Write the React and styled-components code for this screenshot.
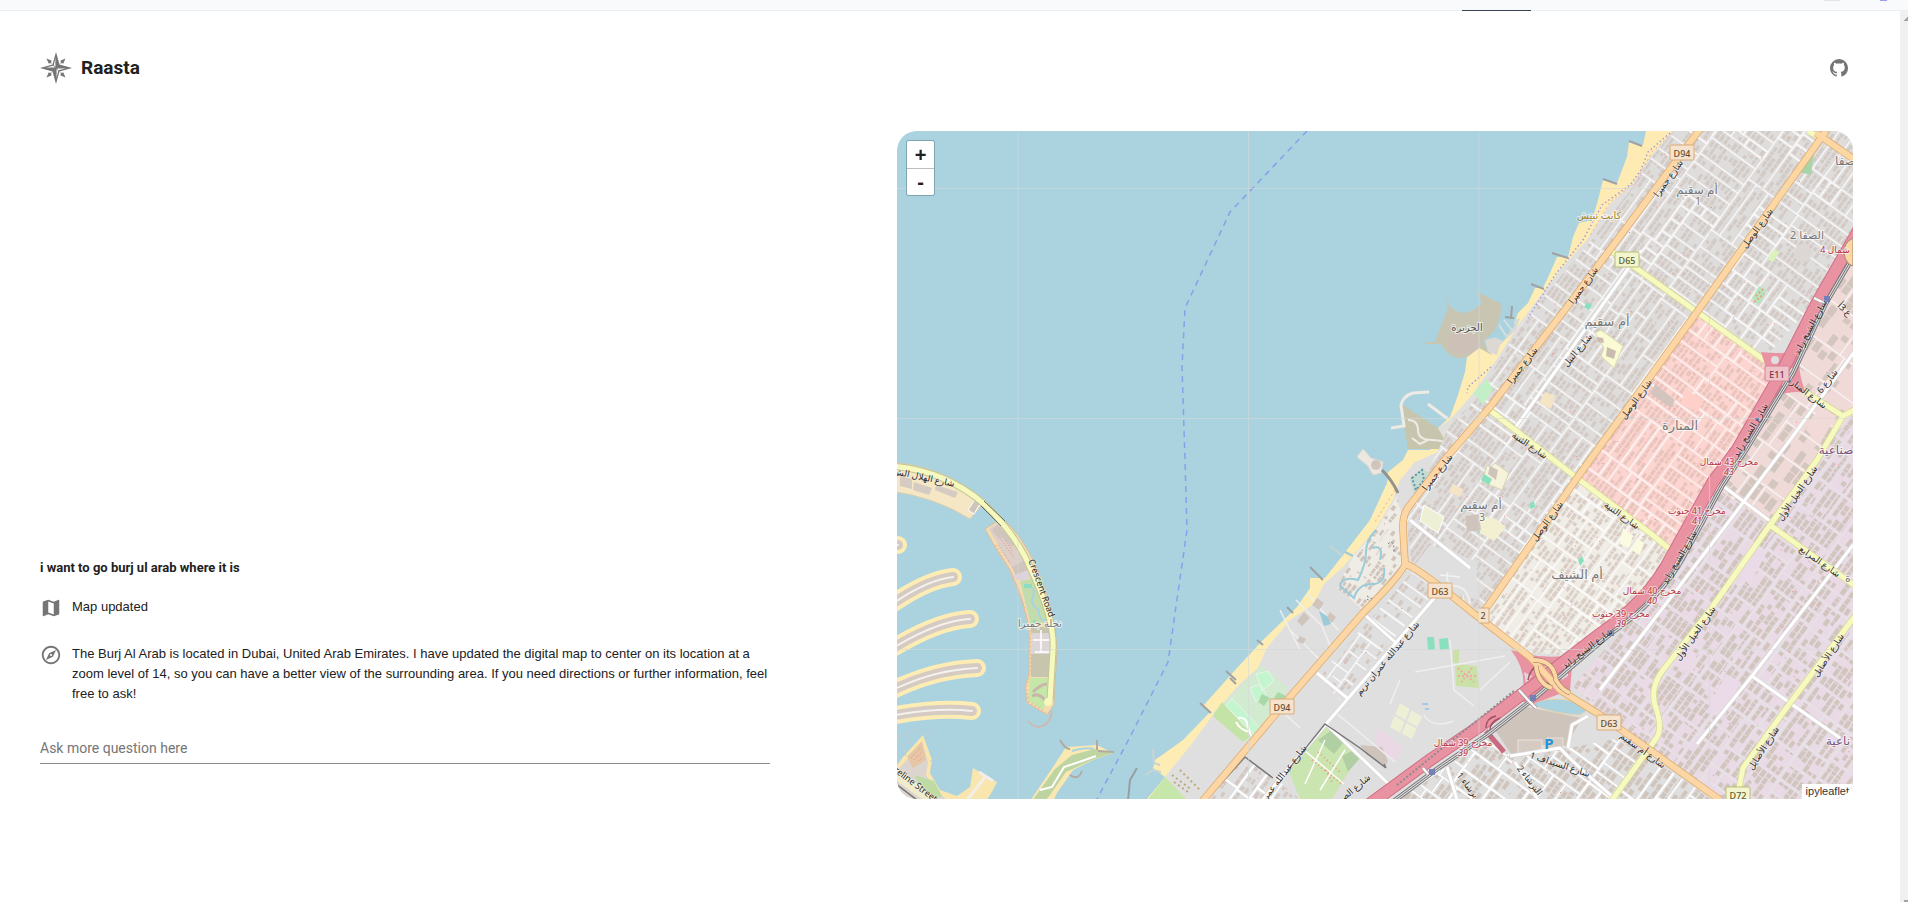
import React from "react";
import styled, { createGlobalStyle } from "styled-components";
import { MdMap, MdOutlineExplore } from "react-icons/md";
import { VscGithubInverted } from "react-icons/vsc";

const GlobalStyle = createGlobalStyle`
  *, *::before, *::after { box-sizing: border-box; }
  body {
    margin: 0;
    background: #ffffff;
    color: #212121;
    font-family: Roboto, "Noto Sans", sans-serif;
  }
`;

/* ---------- map geometry ---------- */

const ANGLE = (-54 * Math.PI) / 180;
const CA = Math.cos(ANGLE);
const SA = Math.sin(ANGLE);

function makeRandom(seed) {
  let s = seed;
  return () => {
    s = (s * 1664525 + 1013904223) % 4294967296;
    return s / 4294967296;
  };
}

const parse = (text) => text.split(" ").map((p) => p.split(",").map(Number));
const toXY = (u, v) => [(u * CA - v * SA).toFixed(1), (u * SA + v * CA).toFixed(1)];
const quad = (u0, v0, u1, v1) =>
  `M${toXY(u0, v0)}L${toXY(u1, v0)}L${toXY(u1, v1)}L${toXY(u0, v1)}Z`;

/* Splits a district into street blocks and fills them with buildings. */
function buildDistrict(points, seed, blockLength, blockWidth, lot, density) {
  const random = makeRandom(seed);
  const uv = parse(points).map(([x, y]) => [x * CA + y * SA, -x * SA + y * CA]);
  const us = uv.map((p) => p[0]);
  const vs = uv.map((p) => p[1]);
  const streets = [];
  const lanes = [];
  const houses = [];
  const specks = [];
  const split = (u0, v0, u1, v1, depth) => {
    const w = u1 - u0;
    const h = v1 - v0;
    const flip = (Math.floor(u0 / 90) + Math.floor(v0 / 70)) % 2 === 0;
    const limitU = flip ? blockLength : blockWidth;
    const limitV = flip ? blockWidth : blockLength;
    if (depth < 14 && (w > limitU * 1.5 || h > limitV * 1.5)) {
      const t = 0.38 + random() * 0.24;
      if (w / limitU > h / limitV) {
        split(u0, v0, u0 + w * t, v1, depth + 1);
        split(u0 + w * t, v0, u1, v1, depth + 1);
      } else {
        split(u0, v0, u1, v0 + h * t, depth + 1);
        split(u0, v0 + h * t, u1, v1, depth + 1);
      }
      return;
    }
    (depth % 3 === 0 ? streets : lanes).push(quad(u0, v0, u1, v1));
    for (let v = v0 + 2; v < v1 - 2; v += lot + 1) {
      const bottom = Math.min(v + lot, v1 - 1.5);
      let u = u0 + 2;
      while (u < u1 - 2) {
        const length = lot * (0.6 + random() * 1.2);
        const right = Math.min(u + length, u1 - 1.5);
        if (random() < density) {
          houses.push(quad(u, v + random() * 0.8, right, bottom - random() * 0.8));
        }
        u += length + 0.8;
      }
    }
    if (random() < 0.6) {
      const [x, y] = toXY(u0 + random() * w, v0 + random() * h);
      specks.push(`M${x},${y}h1v1h-1z`);
    }
  };
  split(Math.min(...us), Math.min(...vs), Math.max(...us), Math.max(...vs), 0);
  return {
    streets: streets.join(""),
    lanes: lanes.join(""),
    houses: houses.join(""),
    specks: specks.join(""),
  };
}

const DISTRICTS = [
  { id: "jumeirah", fill: "#dfdddc", house: "#d3cac5", lane: "#f7f6f6", seed: 7, size: [46, 14, 4, 0.75],
    points: "1674,131 1853,131 1853,237 1817,300 1765,358 1577,478 1490,600 1475,610 1412,565 1406,520 1412,505 1450,425 1475,400 1522,323 1587,245 1633,187 1652,157" },
  { id: "manara", fill: "#fdd5d0", house: "#e8c4bd", lane: "#fbf0ee", seed: 21, size: [46, 13, 4, 0.75],
    points: "1697,315 1765,358 1783,378 1733,453 1670,548 1577,478" },
  { id: "shaif", fill: "#f0ece6", house: "#d9cfc6", lane: "#fbfaf8", seed: 35, size: [34, 15, 4, 0.7],
    points: "1577,480 1650,533 1668,552 1645,590 1600,630 1560,655 1530,653 1482,616" },
  { id: "quoz", fill: "#f0dad8", house: "#d2c6be", lane: "#f6f2f1", seed: 49, size: [44, 28, 8, 0.55],
    points: "1853,256 1853,410 1817,460 1770,525 1716,488 1745,450 1795,372" },
  { id: "industrial", fill: "#e9dae6", house: "#d1c6be", lane: "#e6e2e6", seed: 64, size: [36, 18, 5, 0.72],
    points: "1853,412 1853,799 1713,799 1620,735 1572,685 1612,642 1685,560 1716,488 1770,525 1817,460" },
  { id: "barsha", fill: "#e0dfdf", house: "#d0c5bc", lane: "#ffffff", seed: 80, size: [34, 15, 5, 0.75],
    points: "1400,799 1488,738 1515,758 1570,748 1620,738 1713,799" },
  { id: "sufouh", fill: "#e0dfdf", house: "#d3c9c2", lane: "#f8f8f8", seed: 91, size: [36, 15, 4, 0.4],
    points: "1412,572 1436,590 1340,700 1318,676 1370,620" },
  { id: "marsa", fill: "#e0dfdf", house: "#d3c9c2", lane: "#ffffff", seed: 103, size: [34, 18, 4, 0.5],
    points: "1244,757 1275,778 1300,799 1208,799" },
  { id: "resort", fill: "#efebe5", house: "#d0c5bc", lane: "#efebe5", seed: 117, size: [22, 14, 4, 0.6],
    points: "1397,496 1403,520 1403,562 1363,610 1337,588 1352,558 1376,530" },
].map((d) => ({ ...d, ...buildDistrict(d.points, d.seed, ...d.size) }));

const COAST =
  "1646,131 1643,145 1629,142 1627,157 1617,183 1603,180 1598,200 1592,220 1579,223 1573,237 1568,257 1557,257 1550,273 1543,288 1535,288 1528,303 1518,313 1512,330 1500,342 1492,348 1479,348 1467,357 1465,372 1458,395 1450,417 1438,428 1430,450 1408,450 1403,460 1388,472 1387,483 1370,520 1343,555 1325,578 1310,578 1310,588 1297,607 1263,640 1237,668 1203,706 1210,712 1183,740 1155,760 1153,768 1165,777 1147,799 1853,799 1853,131";
const INLAND =
  "1672,131 1650,157 1633,183 1610,204 1587,240 1560,270 1520,323 1495,362 1472,395 1450,420 1438,428 1450,447 1415,462 1400,480 1393,500 1375,530 1343,567 1324,584 1314,604 1290,620 1267,648 1258,668 1238,686 1213,715 1190,746 1165,777 1185,799 1853,799 1853,131";

const ORANGE = [
  "M1703,125L1600,263L1567,307L1490,407L1447,457L1410,505Q1402,514 1403,530L1405,563Q1406,570 1363,613L1290,697L1200,804",
  "M1405,564Q1416,566 1473,613L1530,657L1560,690L1597,713L1650,750L1720,800",
  "M1826,131L1697,312L1577,478L1490,603L1480,616",
  "M1816,133L1858,162",
];
const YELLOW = [
  "M1610,250L1643,273L1697,312L1760,357L1807,393L1843,416L1858,408",
  "M1843,416L1817,460L1770,525L1710,610L1663,670Q1650,687 1655,705Q1664,730 1655,740L1610,803",
  "M1487,408L1550,457L1577,478L1650,533L1672,551",
  "M1770,525L1858,588",
  "M1858,612L1790,703L1743,768L1736,803",
  "M1808,131L1820,138",
];
const HIGHWAY =
  "M1860,228L1817,303L1783,370L1737,450L1713,482L1672,556Q1650,600 1600,634L1530,688L1480,726L1430,760L1370,804";
const RAIL =
  "M1866,235L1826,303L1793,373L1746,450L1722,486L1684,556Q1660,600 1610,634L1537,696L1487,735L1437,769L1390,804";
const WHITE_ROADS = [
  "M1436,596L1327,723L1283,775L1260,803",
  "M1325,723L1397,792",
  "M1366,616L1395,642",
  "M1317,673L1347,698",
  "M1860,344L1790,440L1730,520L1600,690",
  "M1723,486L1770,521",
  "M1752,676L1790,703L1840,738",
  "M1853,545L1752,676L1697,744",
  "M1642,251L1640,252L1515,428",
  "M1390,803L1440,770",
  "M1510,756L1560,748Q1575,765 1620,803",
  "M1515,762L1540,803",
  "M1447,767L1458,803",
  "M1588,716L1572,725L1568,748",
  "M1410,520L1470,568",
];

const STREET_LABELS = [
  [1668, 178, -54, "شارع جميرا"],
  [1583, 285, -54, "شارع جميرا"],
  [1522, 365, -52, "شارع جميرا"],
  [1437, 472, -52, "شارع جميرا"],
  [1577, 350, -50, "شارع النيل"],
  [1757, 228, -54, "شارع الوصل"],
  [1636, 399, -54, "شارع الوصل"],
  [1547, 521, -54, "شارع الوصل"],
  [1810, 327, -62, "شارع الشيخ زايد"],
  [1750, 430, -60, "شارع الشيخ زايد"],
  [1679, 557, -60, "شارع الشيخ زايد"],
  [1587, 648, -37, "شارع الشيخ زايد"],
  [1807, 392, 37, "شارع المنارة"],
  [1827, 381, -52, "شارع 6"],
  [1845, 309, 44, "ع 3أ"],
  [1530, 445, 34, "شارع الثنية"],
  [1622, 515, 35, "شارع الثنية"],
  [1797, 493, -56, "شارع الخيل الأول"],
  [1695, 633, -55, "شارع الخيل الأول"],
  [1820, 561, 35, "شارع المرابع"],
  [1828, 655, -57, "شارع الأصايل"],
  [1763, 748, -57, "شارع الأصايل"],
  [1643, 750, 36, "شارع أم سقيم"],
  [1560, 764, 18, "شارع السيداف 1"],
  [1530, 780, 52, "البرشاء 2"],
  [1468, 785, 52, "برشاء 1"],
  [1387, 658, -50, "شارع عبدالله عمران تريم"],
  [1284, 772, -52, "شارع عبدالله عمر"],
  [1354, 788, -40, "شارع الص"],
  [924, 477, 12, "شارع الهلال الش"],
  [1042, 588, 70, "Crescent Road"],
  [916, 784, 37, "reline Street"],
];

const PLACE_LABELS = [
  [1697, 189, 12, "#777777", "أم سقيم"],
  [1698, 201, 10, "#777777", "1"],
  [1607, 321, 13, "#777777", "أم سقيم"],
  [1481, 504, 12, "#777777", "أم سقيم"],
  [1482, 517, 10, "#777777", "3"],
  [1680, 425, 13, "#777777", "المنارة"],
  [1577, 574, 13, "#777777", "أم الشيف"],
  [1807, 234, 11, "#777777", "الصفا 2"],
  [1845, 160, 12, "#777777", "صفا"],
  [1467, 327, 10, "#555555", "الجزيرة"],
  [1040, 623, 10, "#777777", "نخلة جميرا"],
  [1599, 215, 10, "#a5842b", "كايت بيتش"],
  [1836, 449, 12, "#7a5580", "صناعية"],
  [1838, 740, 12, "#7a5580", "ناعية"],
  [1848, 577, 11, "#777777", "ة"],
];

const EXITS = [
  [1835, 249, "4 شمال", ""],
  [1729, 461, "مخرج 43 شمال", "43"],
  [1697, 510, "مخرج 41 جنوب", "41"],
  [1652, 590, "مخرج 40 شمال", "40"],
  [1621, 613, "مخرج 39 جنوب", "39"],
  [1463, 742, "مخرج 39 شمال", "39"],
];

const SHIELDS = [
  [1682, 153, "D94", "#f5e3cd", "#d9ac79", "#6b4d2e"],
  [1627, 260, "D65", "#f3f5cf", "#b8bf78", "#5c6030"],
  [1777, 374, "E11", "#eec3ca", "#d78496", "#7c2f42"],
  [1440, 591, "D63", "#f5e3cd", "#d9ac79", "#6b4d2e"],
  [1609, 723, "D63", "#f5e3cd", "#d9ac79", "#6b4d2e"],
  [1282, 707, "D94", "#f5e3cd", "#d9ac79", "#6b4d2e"],
  [1738, 795, "D72", "#f3f5cf", "#b8bf78", "#5c6030"],
];

const FRONDS = [
  "M885,545H898",
  "M885,609Q925,580 953,577",
  "M885,653Q935,621 970,619",
  "M885,694Q930,670 977,668",
  "M885,717Q935,707 972,711",
];

const GROINS =
  "M1629,141L1642,146M1603,179L1617,184M1583,217L1592,220M1552,253L1568,258M1531,284L1544,289M1310,567L1323,580M1287,607L1293,613M1257,640L1263,645M1226,671L1236,680M1230,678L1236,684M1200,703L1211,713M1505,317L1514,318M1512,306L1511,319";

/* ---------- map drawing ---------- */

const MapSvg = styled.svg`
  display: block;
  width: 100%;
  height: 100%;
  font-family: "Noto Sans", "DejaVu Sans", sans-serif;
`;

const MapLabel = styled.text`
  text-anchor: middle;
  dominant-baseline: central;
  paint-order: stroke;
  stroke: ${(p) => p.$halo || "rgba(255,255,255,0.6)"};
  stroke-width: ${(p) => (p.$halo === "none" ? 0 : 2)}px;
  fill: ${(p) => p.$color};
  font-size: ${(p) => p.$size}px;
  font-style: ${(p) => (p.$italic ? "italic" : "normal")};
  font-weight: ${(p) => p.$weight || 400};
`;

function District({ d }) {
  return (
    <g clipPath={`url(#clip-${d.id})`}>
      <polygon points={d.points} fill={d.fill} />
      <path d={d.houses} fill={d.house} />
      <path d={d.lanes} fill="none" stroke={d.lane} strokeWidth="1.4" />
      <path d={d.streets} fill="none" stroke={d.lane} strokeWidth="2" />
      <path d={d.specks} fill="#ee8f88" />
    </g>
  );
}

function Roads({ paths, casing, fill, width }) {
  return (
    <g fill="none" strokeLinejoin="round">
      {paths.map((d) => <path key={`c${d}`} d={d} stroke={casing} strokeWidth={width + 1.5} />)}
      {paths.map((d) => <path key={d} d={d} stroke={fill} strokeWidth={width} />)}
    </g>
  );
}

function Palm() {
  return (
    <g>
      {[["#fdecb3", 18], ["#d5cbc3", 10], ["#f4f1ee", 2]].map(([stroke, width]) => (
        <g key={width} fill="none" stroke={stroke} strokeWidth={width} strokeLinecap="round">
          {FRONDS.map((d) => <path key={d} d={d} />)}
        </g>
      ))}
      <path d="M890,462Q945,466 985,501L970,519Q935,497 890,491Z" fill="#f5e6c4" stroke="#d8ceb0" />
      <path d="M900,476l12,3v10l-12,-3zM914,482l18,6-3,7-16,-5zM936,485l22,7-3,6-20,-8z" fill="#d5cbc3" />
      <path d="M968,510l8,-12 5,4-7,12z" fill="#d0c5bc" stroke="#ffffff" />
      <path d="M1002,518L985,529L995,547L1010,570L1022,600L1029,627L1029,673L1025,687L1027,703L1047,715L1054,705L1057,650Q1054,605 1037,568Q1022,535 1002,518Z" fill="#f2dcb0" stroke="#cdbfa8" />
      <path d="M989,529l11,-8 22,24 6,14-16,9-12,-20z" fill="#dccfc8" />
      <path d="M992,530l6,-5 8,8-7,6zM1001,536l8,-4 7,9-4,6zM1012,567l14,-7 4,10-13,10z" fill="#d0c5bc" />
      <path d="M1012,576l20,-8 8,6-18,7z" fill="#ddd3dc" />
      <path d="M1020,581l22,-4 9,43-20,6z" fill="#c3dcae" />
      <path d="M1025,585q12,3 8,11t6,14q-2,8 7,12" fill="none" stroke="#aad3df" strokeWidth="2" />
      <path d="M1024,584h8v4h-8zM1033,620h3v3h-3z" fill="#8ae0be" />
      <path d="M1031,627h22v6h-22zM1031,654h22v23h-22z" fill="#c8c5ae" />
      <path d="M1031,633h22v21h-22z" fill="#dcd6d6" />
      <path d="M1030,678h20v20l-8,12-14,-10z" fill="#c5e8a8" />
      <path d="M1033,692q8,-8 14,-8M1032,696q8,-4 14,6" fill="none" stroke="#c8b8ac" strokeWidth="3" />
      <path d="M1041,630v22M1033,640h18M1035,652h16" stroke="#ffffff" strokeWidth="1.5" />
      <path d="M995,545L1011,572L1023,602L1030,632V672L1026,688L1029,702L1046,713" fill="none" stroke="#f0bd9c" strokeWidth="2" strokeDasharray="2 2" />
      <path d="M1052,711Q1050,726 1038,727Q1032,726 1028,721" fill="none" stroke="#cdb9b4" strokeWidth="2" />
      <path d="M1000,538l14,20M998,545l12,18M1005,540l8,12" stroke="#ef8a8a" strokeDasharray="1 2" />
      <path d="M890,466Q945,470 984,504Q1018,536 1032,572Q1055,620 1053,650L1050,700" fill="none" stroke="#c4c492" strokeWidth="7" />
      <path d="M890,466Q945,470 984,504Q1018,536 1032,572Q1055,620 1053,650L1050,700" fill="none" stroke="#f6f9bd" strokeWidth="5" />
      <circle cx="1048" cy="702" r="4" fill="#f6f9bd" />
      <path d="M984,501L1005,521M981,506L1001,526" stroke="#706d60" />
      <path d="M890,775L903,757L923,735L932,760L930,773L940,790L957,796L970,787L973,768L997,782L993,790L985,803H890Z" fill="#f9e5ae" />
      <path d="M890,778L905,762L922,742L928,762L926,775L936,790L950,803H890Z" fill="#ddd5cf" />
      <path d="M907,757L922,741L926,760L913,768z" fill="#e5c6a6" />
      <path d="M911,758l10,-11M914,760l8,-8M918,761l5,-4" stroke="#ee9077" strokeDasharray="1 2" />
      <path d="M914,775l20,6 8,15-12,5z" fill="#bddba3" />
      <path d="M979,772l14,9M985,777l-17,22" stroke="#f2efec" strokeWidth="3" />
      <path d="M898,737l22,-9M901,738l5,18M908,735l4,12M925,734l8,-1M930,761l8,-3" stroke="#c4cdd2" />
      <path d="M888,768L942,808" stroke="#f1eccb" strokeWidth="10" />
      <path d="M888,778L925,806M886,782L918,808" stroke="#777777" strokeWidth="1.5" />
      <path d="M1030,801L1053,767L1066,747L1097,745L1113,753L1093,760L1073,770L1057,793L1053,801Z" fill="#fae8b2" />
      <path d="M1032,801L1055,769L1072,755L1095,749L1113,753L1092,760L1066,772L1050,795L1045,801Z" fill="#bfd5a1" />
      <path d="M1072,751q12,-4 22,-2" fill="none" stroke="#abd3df" strokeWidth="2" />
      <path d="M1040,790l12,-3 12,-20 18,-6 14,-5" fill="none" stroke="#ffffff" strokeWidth="2" />
      <path d="M1060,740q5,9 10,9M1097,740v10M1098,751l16,1M1070,775q8,6 12,-4" fill="none" stroke="#b3a9a2" strokeWidth="2" />
      <path d="M1137,768L1130,780L1128,801" fill="none" stroke="#969fa1" strokeWidth="2" />
    </g>
  );
}

function MapDrawing() {
  return (
    <MapSvg viewBox="897 131 956 668" preserveAspectRatio="xMidYMid slice" role="img" aria-label="Map of Jumeirah, Dubai">
      <defs>
        {DISTRICTS.map((d) => (
          <clipPath id={`clip-${d.id}`} key={d.id}><polygon points={d.points} /></clipPath>
        ))}
      </defs>
      <rect x="897" y="131" width="956" height="668" fill="#abd3df" />
      <path d="M1307,131L1230,212L1185,308L1182,367L1185,460L1187,530L1168,662L1130,737L1097,799" fill="none" stroke="#86a0ec" strokeWidth="1.5" strokeDasharray="6 5" />
      <Palm />

      <polygon points={COAST} fill="#fdecb3" />
      <polygon points={INLAND} fill="#e0dfdf" />
      <path d="M1445,293L1448,303Q1452,311 1463,313Q1474,312 1482,302L1477,292L1502,304Q1501,317 1495,330L1483,342L1492,355L1479,348L1467,357Q1455,362 1444,349L1441,344L1425,344L1426,342L1435,342Q1441,325 1448,308Z" fill="#c8c5b3" />
      <ellipse cx="1463" cy="343" rx="16" ry="11" fill="#cdc0b7" />
      <path d="M1485,340L1500,336L1512,322L1520,318L1516,330L1500,345L1497,355L1488,352Z" fill="#dcd9d5" />
      <path d="M1492,336L1512,318L1515,325L1503,341Z" fill="#abd3df" />
      <path d="M1499,325l8,12M1504,320l8,10" stroke="#d5dfe0" strokeWidth="2" />
      <path d="M1400,403L1438,428L1450,449H1408Z" fill="#c8c5ae" />
      <path d="M1429,392L1413,393Q1403,396 1401,405L1404,426L1391,428M1428,404L1448,419" fill="none" stroke="#eeebe5" strokeWidth="3" />
      <path d="M1408,420q10,0 10,10t14,10 14,6M1412,438l8,6 8,-4" fill="none" stroke="#eeebe5" strokeWidth="2" />

      {DISTRICTS.map((d) => <District key={d.id} d={d} />)}

      <path d="M1262,665L1288,688L1265,728L1245,742L1213,713L1230,697Z" fill="#d2ead0" />
      <path d="M1256,674l12,-3 6,10-12,10zM1250,688l10,-4 6,10-10,8zM1232,698l28,30-6,6-28,-28z" fill="#c3f5ce" stroke="#e9f3e8" />
      <path d="M1262,694l8,4-6,8-6,-4zM1278,692l8,4-6,6-6,-4z" fill="#a9d9a6" />
      <path d="M1222,702L1252,735L1243,742L1213,716Z" fill="#c4e3a6" />
      <path d="M1238,718q8,-2 10,8t4,10M1236,722q4,8 14,10" fill="none" stroke="#ffffff" strokeWidth="2" />
      <path d="M1327,727L1360,753L1332,799H1300L1287,767Z" fill="#cbe5b0" />
      <path d="M1318,740l14,-10 12,12-10,12zM1342,756l12,-6 6,8-12,14z" fill="#b0cfa2" />
      <path d="M1304,750l40,34M1325,740l-20,44M1345,750l-25,40" stroke="#ffffff" strokeWidth="1.5" />
      <path d="M1312,760l30,24M1318,752l22,20M1326,770l6,12" stroke="#ee9a84" strokeWidth="2" strokeDasharray="1 3" />
      <path d="M1165,777L1188,801H1147Z" fill="#c6e6aa" />
      <path d="M1172,775l20,15M1180,770l20,20M1174,782l14,10" stroke="#bda77d" strokeDasharray="2 3" strokeWidth="2" />
      <path d="M1427,637h7l1,13h-7zM1439,639l9,-1 1,11-9,1z" fill="#8ae0be" />
      <path d="M1455,664l22,2 2,22-23,-2zM1453,650h6v13h-6z" fill="#cbe2a6" />
      <path d="M1458,668l16,14M1472,668l-12,16M1458,676h18" stroke="#ecabaa" strokeWidth="2" strokeDasharray="2 2" />
      <path d="M1400,703l22,14-10,22-22,-12z" fill="#eef0d5" />
      <path d="M1411,709l-10,24M1395,715l22,13" stroke="#e0dfdf" strokeWidth="2" />
      <path d="M1378,728l26,20-10,14-20,-16z" fill="#ead9e5" />
      <path d="M1422,704h6M1425,709h4" stroke="#6fb0ee" />
      <path d="M1360,745l22,2 6,14-3,6-18,-12z" fill="#cfc4bb" />
      <path d="M1448,572l14,10 2,24M1450,640l4,50 20,16M1415,672l90,-16M1424,715q8,14 30,6M1480,690l30,-28M1400,680l-10,24M1335,712l60,50M1300,650l-20,-40M1290,630l30,30M1270,700l30,28M1296,600l26,26 10,24M1308,594l30,36" fill="none" stroke="#f0efee" strokeWidth="1.5" />
      <path d="M1304,612l6,6-8,8-5,-5zM1317,598l7,5-5,7-7,-5zM1330,612l6,5-4,6-6,-4zM1300,636l6,3-3,5-6,-3z" fill="#d0c5bc" />
      <path d="M1319,611l8,5 4,8-7,2z" fill="#9bcbd9" />
      <path d="M1376,530q-10,10 -10,22t-8,28q-16,-4 -18,6l14,12q4,-14 18,-14t12,-16M1345,552l8,4M1372,548q12,-4 8,12" fill="none" stroke="#9bcbd9" strokeWidth="2" />
      <path d="M1367,596l10,6M1367,599l8,5M1388,544q6,-6 6,8" fill="none" stroke="#667d87" strokeDasharray="2 2" />
      <path d="M1410,480l12,-12 8,6-14,26z" fill="#c5dcd5" />
      <path d="M1412,478l10,-8 2,10-8,10z" fill="none" stroke="#5f94a5" strokeWidth="2" strokeDasharray="2 2" />
      <path d="M1473,393l14,-14 6,10-10,16z" fill="#c2f0c6" />
      <path d="M1595,333l6,-3 22,16-9,22-13,-12 3,-8z" fill="#fafbd2" stroke="#ddd9b5" />
      <path d="M1607,347l9,4-2,8-8,-3zM1597,337l6,1 1,5-6,-1z" fill="#c9bbb0" />
      <path d="M1545,392l10,4-4,13-12,-6z" fill="#f5e5c4" />
      <path d="M1587,302l5,3-3,5-5,-3z" fill="#8ae0be" />
      <path d="M1799,172l6,-9 9,-10-3,22z" fill="#a8d5a9" />
      <path d="M1752,298l7,-12 8,4-8,16z" fill="#b6e4c2" />
      <path d="M1756,296l8,-8M1754,302l10,-8" stroke="#f0a070" strokeDasharray="2 2" strokeWidth="2" />
      <path d="M1770,254l5,-5 4,3-6,10-5,-2z" fill="#d9f3bb" />
      <circle cx="1803" cy="253" r="9" fill="#ddd8d4" />
      <path d="M1487,465l4,2 4,-4 14,10-7,17-20,-8z" fill="#f5f3d9" stroke="#d6d1b5" />
      <path d="M1484,474l8,5-3,6-8,-5zM1530,503l4,-2 1,6-5,2zM1578,560l4,-4 2,5-4,5zM1476,527l4,-2 2,5-4,3z" fill="#8ae0be" />
      <path d="M1478,515l18,4 10,8-12,14-14,-8z" fill="#f3f0d1" />
      <path d="M1465,516l14,-2 2,16-14,2zM1490,466l8,4-2,10-8,-6z" fill="#cfc4bb" />
      <path d="M1424,505l20,12-6,16-18,-12z" fill="#eef0d5" stroke="#ffffff" />
      <path d="M1453,484l10,5-3,8-11,-5z" fill="#f5e5c4" />
      <path d="M1444,549L1478,562Q1474,580 1480,600L1450,592Q1420,566 1414,566L1430,545Z" fill="#e0dfdf" />
      <path d="M1448,572q-4,12 8,14t14,18M1440,575l20,2" fill="none" stroke="#f3f2f1" strokeWidth="1.5" />
      <path d="M1623,528l10,8-4,12-9,-4zM1637,538l7,5-4,12-8,-5z" fill="#fbfbe0" />
      <path d="M1655,384l20,16-4,8-20,-14z" fill="#d3c4bd" />
      <path d="M1686,390l18,10-6,12-18,-8z" fill="#ffcfc9" />
      <path d="M1678,645l18,8-4,20-20,-8zM1726,674l15,8-18,38-16,-10zM1750,545l16,8-16,32-12,-10z" fill="#ebdbe8" />
      <path d="M1806,430l14,-24 16,10-16,28z" fill="#f2dad9" />

      <path d="M1493,727L1527,707L1582,718L1566,746L1540,745L1513,757Z" fill="#cfc4bb" />
      <path d="M1518,740h24v13h-24zM1547,738h16v13h-16z" fill="#d5cbc3" stroke="#ffffff" strokeWidth="0.5" />
      <path d="M1532,705Q1542,697 1567,700Q1580,703 1586,711L1580,715Q1555,714 1532,705Z" fill="#abd3df" stroke="#e8d2a5" />

      <path d="M1357,457L1363,449L1371,458L1383,462L1381,473L1373,475L1368,466Z" fill="#ece8e1" stroke="#ddd8cc" />
      <circle cx="1376" cy="465" r="5" fill="#d0c5bc" />
      <path d="M1382,470Q1392,480 1398,493" fill="none" stroke="#92918e" strokeWidth="3" />
      <path d="M1330,546L1343,556M1153,749l1,14 6,2M1145,775l8,-5 8,2" fill="none" stroke="#c9d3d4" strokeWidth="2" />
      <path d={GROINS} stroke="#a0a1a2" strokeWidth="2" />
      <path d="M1670,133L1648,152L1641,170L1630,185L1602,205L1583,240L1555,275L1528,318M1491,367L1468,387L1467,393" fill="none" stroke="#a99cd2" strokeWidth="1.5" strokeDasharray="1.5 2.5" />
      <path d="M1672,134L1652,152L1636,182L1610,202L1590,236M1395,490L1375,522" fill="none" stroke="#f0aa94" strokeDasharray="2 3" />

      <Roads paths={WHITE_ROADS} casing="#d9d6d6" fill="#ffffff" width={3} />
      <path d="M1288,770L1325,724L1360,748L1386,768L1384,764M1207,799L1245,757L1273,778" fill="none" stroke="#77777a" strokeWidth="1.5" />
      <Roads paths={YELLOW} casing="#d8d996" fill="#f7fabf" width={5} />

      <path d="M1511,650Q1540,660 1573,655L1570,690L1530,705L1520,700Q1530,675 1511,650Z" fill="#e892a2" />
      <path d="M1541,668l12,-4-2,8-8,4zM1560,672l8,-4v8l-6,4zM1524,672l8,4-6,8z" fill="#e2d6da" />
      <path d="M1761,352Q1783,354 1787,352L1800,356Q1797,372 1806,393Q1790,390 1775,397Z" fill="#e892a2" />
      <circle cx="1775" cy="360" r="4" fill="#e0dfdf" />
      <circle cx="1792" cy="371" r="3" fill="#eadfe2" />
      <circle cx="1785" cy="384" r="3" fill="#eadfe2" />
      <path d="M1486,731L1504,752" stroke="#c86b81" strokeWidth="5" />
      <path d={HIGHWAY} fill="none" stroke="#cf6f85" strokeWidth="13" />
      <path d={HIGHWAY} fill="none" stroke="#e892a2" strokeWidth="11" />
      <path d={RAIL} fill="none" stroke="#77777a" strokeWidth="5" />
      <path d={RAIL} fill="none" stroke="#dedcdd" strokeWidth="3" />
      <path d={RAIL} fill="none" stroke="#6d6d70" strokeWidth="1" />
      <path d="M1397,785L1440,750L1515,690" fill="none" stroke="#8c8c8c" strokeWidth="2" strokeDasharray="2 2" />
      <path d="M1519,690L1528,700L1536,708M1423,768l5,6M1814,298l10,5" fill="none" stroke="#b79fa4" strokeWidth="4" />
      <path d="M1519,690L1528,700L1536,708M1423,768l5,6M1814,298l10,5" fill="none" stroke="#ffffff" strokeWidth="2" />
      <path d="M1486,728q0,-10 10,-12M1490,730q0,-8 10,-12M1528,680q2,-12 12,-16" fill="none" stroke="#a24f66" strokeWidth="1.5" />

      <Roads paths={ORANGE} casing="#dcab6d" fill="#fcd6a4" width={6} />
      <path d="M1533,660Q1554,660 1556,680Q1562,690 1570,693M1536,666Q1538,684 1552,688" fill="none" stroke="#8f7050" strokeWidth="5" />
      <path d="M1533,660Q1554,660 1556,680Q1562,690 1570,693M1536,666Q1538,684 1552,688" fill="none" stroke="#fcd6a4" strokeWidth="4" />
      <path d="M1853,238q-10,5 -9,16 2,10 9,12z" fill="#fcd6a4" stroke="#a08a70" />
      {[[1611, 633], [1533, 698], [1432, 772], [1827, 299]].map(([x, y]) => (
        <rect key={x} x={x - 3} y={y - 3} width="6" height="6" fill="#7580b5" />
      ))}
      <path d="M1018,131V799M1248.5,131V799M1479,131V799M1709.5,131V799M897,188.5H1853M897,418.5H1853M897,649.5H1853" stroke="#d6dad8" strokeWidth="1" opacity="0.6" />

      {STREET_LABELS.map(([x, y, angle, label]) => (
        <MapLabel key={`${x}-${y}`} x={x} y={y} transform={`rotate(${angle} ${x} ${y})`} $size={9} $color="#2e2b28" $halo="rgba(255,255,255,0.25)">
          {label}
        </MapLabel>
      ))}
      {PLACE_LABELS.map(([x, y, size, color, label]) => (
        <MapLabel key={`${x}-${y}`} x={x} y={y} $size={size} $color={color}>{label}</MapLabel>
      ))}
      {EXITS.map(([x, y, label, number]) => (
        <g key={`${x}-${y}`}>
          <MapLabel x={x} y={y} $size={9} $color="#b8323f">{label}</MapLabel>
          {number && <MapLabel x={x} y={y + 10} $size={9} $color="#b8323f" $italic>{number}</MapLabel>}
        </g>
      ))}
      {SHIELDS.map(([x, y, label, fill, stroke, color]) => (
        <g key={`${x}-${y}`}>
          <rect x={x - 12} y={y - 8} width="24" height="15" rx="1" fill={fill} stroke={stroke} />
          <MapLabel x={x} y={y} $size={9} $color={color} $halo="none" $weight={500}>{label}</MapLabel>
        </g>
      ))}
      <path d="M1479,608H1489V623H1479" fill="#f5e3cd" stroke="#d9ac79" />
      <MapLabel x={1483} y={615} $size={9} $color="#6b4d2e" $halo="none" $weight={500}>2</MapLabel>
      <MapLabel x={1549} y={743} $size={15} $color="#1f93dc" $halo="none" $weight={700}>P</MapLabel>
    </MapSvg>
  );
}

/* ---------- page ---------- */

const Page = styled.div`
  display: flex;
  flex-direction: column;
  min-height: 100vh;
`;

const HostBar = styled.div`
  display: flex;
  justify-content: flex-end;
  align-items: flex-start;
  height: 11px;
  padding-right: 21px;
  background: #f9fafc;
  border-bottom: 1px solid #eceff2;
`;

const ActiveTab = styled.span`
  align-self: flex-end;
  width: 69px;
  height: 1px;
  margin: 0 293px -1px 0;
  background: #374151;
`;

const Sliver = styled.span`
  width: ${(p) => p.$width}px;
  height: 1px;
  margin-left: ${(p) => p.$gap || 0}px;
  background: ${(p) => p.$color};
`;

const Body = styled.div`
  display: flex;
  flex: 1;
`;

const Content = styled.div`
  flex: 1;
  min-width: 0;
`;

const ScrollTrack = styled.div`
  display: flex;
  flex-direction: column;
  justify-content: space-between;
  align-items: flex-end;
  width: 8px;
  padding-top: 6px;
  background: #f0f0f0;
  overflow: hidden;
`;

const ArrowUp = styled.span`
  width: 4px;
  height: 4px;
  background: linear-gradient(to bottom right, transparent 50%, #a3a3a3 50%);
`;

const ArrowDown = styled.span`
  width: 4px;
  height: 2px;
  background: #a3a3a3;
`;

const Header = styled.header`
  display: flex;
  justify-content: space-between;
  align-items: center;
  height: 120px;
  padding: 0 52px 6px 40px;
`;

const Brand = styled.div`
  display: flex;
  align-items: center;
  gap: 9px;
`;

const BrandName = styled.h1`
  margin: 0;
  font-size: 19px;
  line-height: 24px;
  font-weight: 700;
`;

const IconLink = styled.a`
  display: flex;
  color: #757575;
`;

const Main = styled.main`
  display: grid;
  grid-template-columns: minmax(0, 730fr) minmax(0, 956fr);
  gap: 127px;
  height: calc(100vh - 234px);
  padding: 0 47px 0 40px;
`;

const Chat = styled.section`
  display: flex;
  flex-direction: column;
  justify-content: flex-end;
  padding-bottom: 35px;
`;

const Question = styled.h2`
  margin: 0 0 19px;
  font-size: 13px;
  line-height: 20px;
  font-weight: 700;
`;

const Message = styled.div`
  display: flex;
  align-items: flex-start;
  gap: 10px;
  margin-bottom: ${(p) => p.$space}px;
  font-family: "Liberation Sans", Arial, sans-serif;
  font-size: 13px;
  line-height: 20px;

  svg {
    flex: none;
    color: #757575;
  }
`;

const MessageText = styled.p`
  margin: 0;
`;

const QuestionInput = styled.input`
  width: 100%;
  height: 32px;
  padding: 0;
  border: 0;
  border-bottom: 1px solid #8a8a8a;
  border-radius: 0;
  background: transparent;
  color: #212121;
  font-family: inherit;
  font-size: 14px;
  outline: none;

  &::placeholder {
    color: #757575;
    opacity: 1;
  }
`;

const MapPanel = styled.section`
  position: relative;
  overflow: hidden;
  border-radius: 20px;
`;

const ZoomControl = styled.div`
  position: absolute;
  top: 10px;
  left: 10px;
  display: flex;
  flex-direction: column;
  overflow: hidden;
  border-radius: 2px;
  box-shadow: 0 0 0 1px rgba(90, 130, 140, 0.55);
`;

const ZoomButton = styled.button`
  width: 27px;
  height: 27px;
  padding: 0;
  border: 0;
  background: #ffffff;
  color: #212121;
  font: bold 20px/26px "Liberation Sans", Arial, sans-serif;
  cursor: pointer;

  & + & {
    border-top: 1px solid #bdbdbd;
  }
`;

const Attribution = styled.a`
  position: absolute;
  right: 0;
  bottom: 0;
  padding: 0 4px;
  background: #ffffff;
  color: #333333;
  font: 11px/15px "Liberation Sans", Arial, sans-serif;
  text-decoration: none;
`;

function CompassLogo() {
  return (
    <svg width="32" height="32" viewBox="0 0 32 32" fill="#757575" aria-hidden="true">
      <path fillRule="evenodd" d="M16 0L19.500 12.500L32 16L19.500 19.500L16 32L12.500 19.500L0 16L12.500 12.500ZM15.400 6L13.800 13.200L15.400 15ZM26 16.600L18.200 18.200L17 16.600ZM16.600 26V17L18.200 18.800ZM6 15.400L13.200 13.800L15 15.400Z" />
      <path d="M6.500 6.500L11.800 8.800L10.900 10.300L12 12L10 10.900L8.800 11.800ZM25.500 6.500L20.200 8.800L21.100 10.300L20 12L22 10.900L23.200 11.800ZM6.500 25.500L11.800 23.200L10.900 21.700L12 20L10 21.100L8.800 20.200ZM25.500 25.500L20.200 23.200L21.100 21.700L20 20L22 21.100L23.200 20.200Z" />
    </svg>
  );
}

export default function App() {
  return (
    <Page>
      <GlobalStyle />
      <HostBar>
        <ActiveTab />
        <Sliver $width={16} $color="#e3e5e8" />
        <Sliver $width={7} $gap={40} $color="#9a9cf8" />
      </HostBar>
      <Body>
        <Content>
          <Header>
            <Brand>
              <CompassLogo />
              <BrandName>Raasta</BrandName>
            </Brand>
            <IconLink href="#github" aria-label="GitHub">
              <VscGithubInverted size={18} />
            </IconLink>
          </Header>
          <Main>
            <Chat>
              <Question>i want to go burj ul arab where it is</Question>
              <Message $space={25}>
                <MdMap size={22} aria-hidden="true" />
                <MessageText>Map updated</MessageText>
              </Message>
              <Message $space={28}>
                <MdOutlineExplore size={22} aria-hidden="true" />
                <MessageText>
                  The Burj Al Arab is located in Dubai, United Arab Emirates. I have updated the digital map to center on
                  its location at a zoom level of 14, so you can have a better view of the surrounding area. If you need
                  directions or further information, feel free to ask!
                </MessageText>
              </Message>
              <QuestionInput type="text" aria-label="Question" placeholder="Ask more question here" />
            </Chat>
            <MapPanel>
              <MapDrawing />
              <ZoomControl>
                <ZoomButton type="button" aria-label="Zoom in">+</ZoomButton>
                <ZoomButton type="button" aria-label="Zoom out">-</ZoomButton>
              </ZoomControl>
              <Attribution href="#ipyleaflet">ipyleaflet</Attribution>
            </MapPanel>
          </Main>
        </Content>
        <ScrollTrack aria-hidden="true">
          <ArrowUp />
          <ArrowDown />
        </ScrollTrack>
      </Body>
    </Page>
  );
}
